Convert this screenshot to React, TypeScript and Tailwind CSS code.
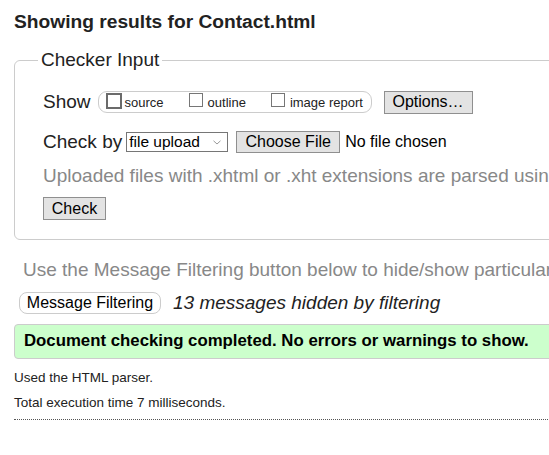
export default function App() {
  return (
    <div className="w-screen min-h-screen overflow-hidden bg-white text-[#222] font-['Liberation_Sans',Arial,sans-serif]">
      <div className="w-[760px] pl-[14px]">
        {/* Heading */}
        <h2 className="pt-[11px] text-[19.2px] leading-[22px] font-bold text-[#222]">
          Showing results for Contact.html
        </h2>

        {/* Checker input */}
        <fieldset className="mt-[17px] border border-[#ccc] rounded-[6px] pl-[28px] pb-[18px]">
          <legend className="-ml-[5px] px-[3px] text-[19px] leading-[20px] text-[#222]">Checker Input</legend>

          <div className="pt-[20px] flex items-center h-[24px] box-content">
            <span className="text-[19px] leading-[24px]">Show</span>
            <div className="ml-[7px] h-[22px] w-[274px] border border-[#ccc] rounded-[9px] flex items-center pl-[7px] text-[13px] leading-[16px] text-[#222]">
              <span className="w-[16px] h-[16px] border-2 border-[#6b6b6b] bg-white -mt-[3px]" />
              <span className="ml-[3px] mt-[2px]">source</span>
              <span className="ml-[25px] w-[14px] h-[14px] border border-[#767676] bg-white -mt-[4px]" />
              <span className="ml-[5px] mt-[2px]">outline</span>
              <span className="ml-[25px] w-[14px] h-[14px] border border-[#767676] bg-white -mt-[4px]" />
              <span className="ml-[5px] mt-[2px]">image report</span>
            </div>
            <button className="ml-[12px] h-[23px] w-[89px] border border-[#8f8f8f] bg-[#e3e3e3] text-[16px] leading-[20px] text-black">
              Options…
            </button>
          </div>

          <div className="mt-[16px] flex items-center h-[24px]">
            <span className="text-[19px] leading-[24px]">Check by</span>
            <div className="ml-[4px] h-[20px] w-[102px] border border-[#767676] bg-white flex items-center pl-[2px] pr-[6px] text-[15.5px] leading-[18px] text-black">
              <span className="flex-1">file upload</span>
              <svg width="8" height="5" viewBox="0 0 8 5" fill="none" stroke="#999" strokeWidth="1">
                <path d="M0.5 0.8 L4 4 L7.5 0.8" />
              </svg>
            </div>
            <button className="ml-[8px] h-[22px] w-[104px] border border-[#8f8f8f] bg-[#e3e3e3] text-[16px] leading-[20px] text-black">
              Choose File
            </button>
            <span className="ml-[5px] text-[16px] leading-[20px] text-black">No file chosen</span>
          </div>

          <p className="mt-[10px] text-[19px] leading-[24px] text-[#888] whitespace-nowrap">
            Uploaded files with .xhtml or .xht extensions are parsed using the XML parser.
          </p>

          <button className="mt-[9px] h-[23px] w-[63px] border border-[#8f8f8f] bg-[#e3e3e3] text-[16px] leading-[20px] text-black">
            Check
          </button>
        </fieldset>

        {/* Filtering */}
        <p className="mt-[18px] pl-[9px] text-[19px] leading-[24px] text-[#888] whitespace-nowrap">
          Use the Message Filtering button below to hide/show particular messages.
        </p>

        <div className="mt-[9px] flex items-center h-[24px]">
          <button className="ml-[5px] h-[22px] w-[142px] border border-[#ccc] rounded-[8px] bg-white text-[16px] leading-[20px] text-black">
            Message Filtering
          </button>
          <span className="ml-[12px] text-[19px] leading-[24px] italic text-[#222]">13 messages hidden by filtering</span>
        </div>

        {/* Result */}
        <div className="mt-[9px] h-[35px] border border-[#ccc] rounded-[4px] bg-[#ccffcc] flex items-center pl-[9px]">
          <span className="text-[16.8px] leading-[20px] font-bold text-black">
            Document checking completed. No errors or warnings to show.
          </span>
        </div>

        <p className="mt-[11px] text-[13.5px] leading-[16px] text-[#222]">Used the HTML parser.</p>
        <p className="mt-[9px] text-[13.5px] leading-[16px] text-[#222]">Total execution time 7 milliseconds.</p>

        <div className="mt-[8px] border-t border-dotted border-[#555]" />
      </div>
    </div>
  );
}
